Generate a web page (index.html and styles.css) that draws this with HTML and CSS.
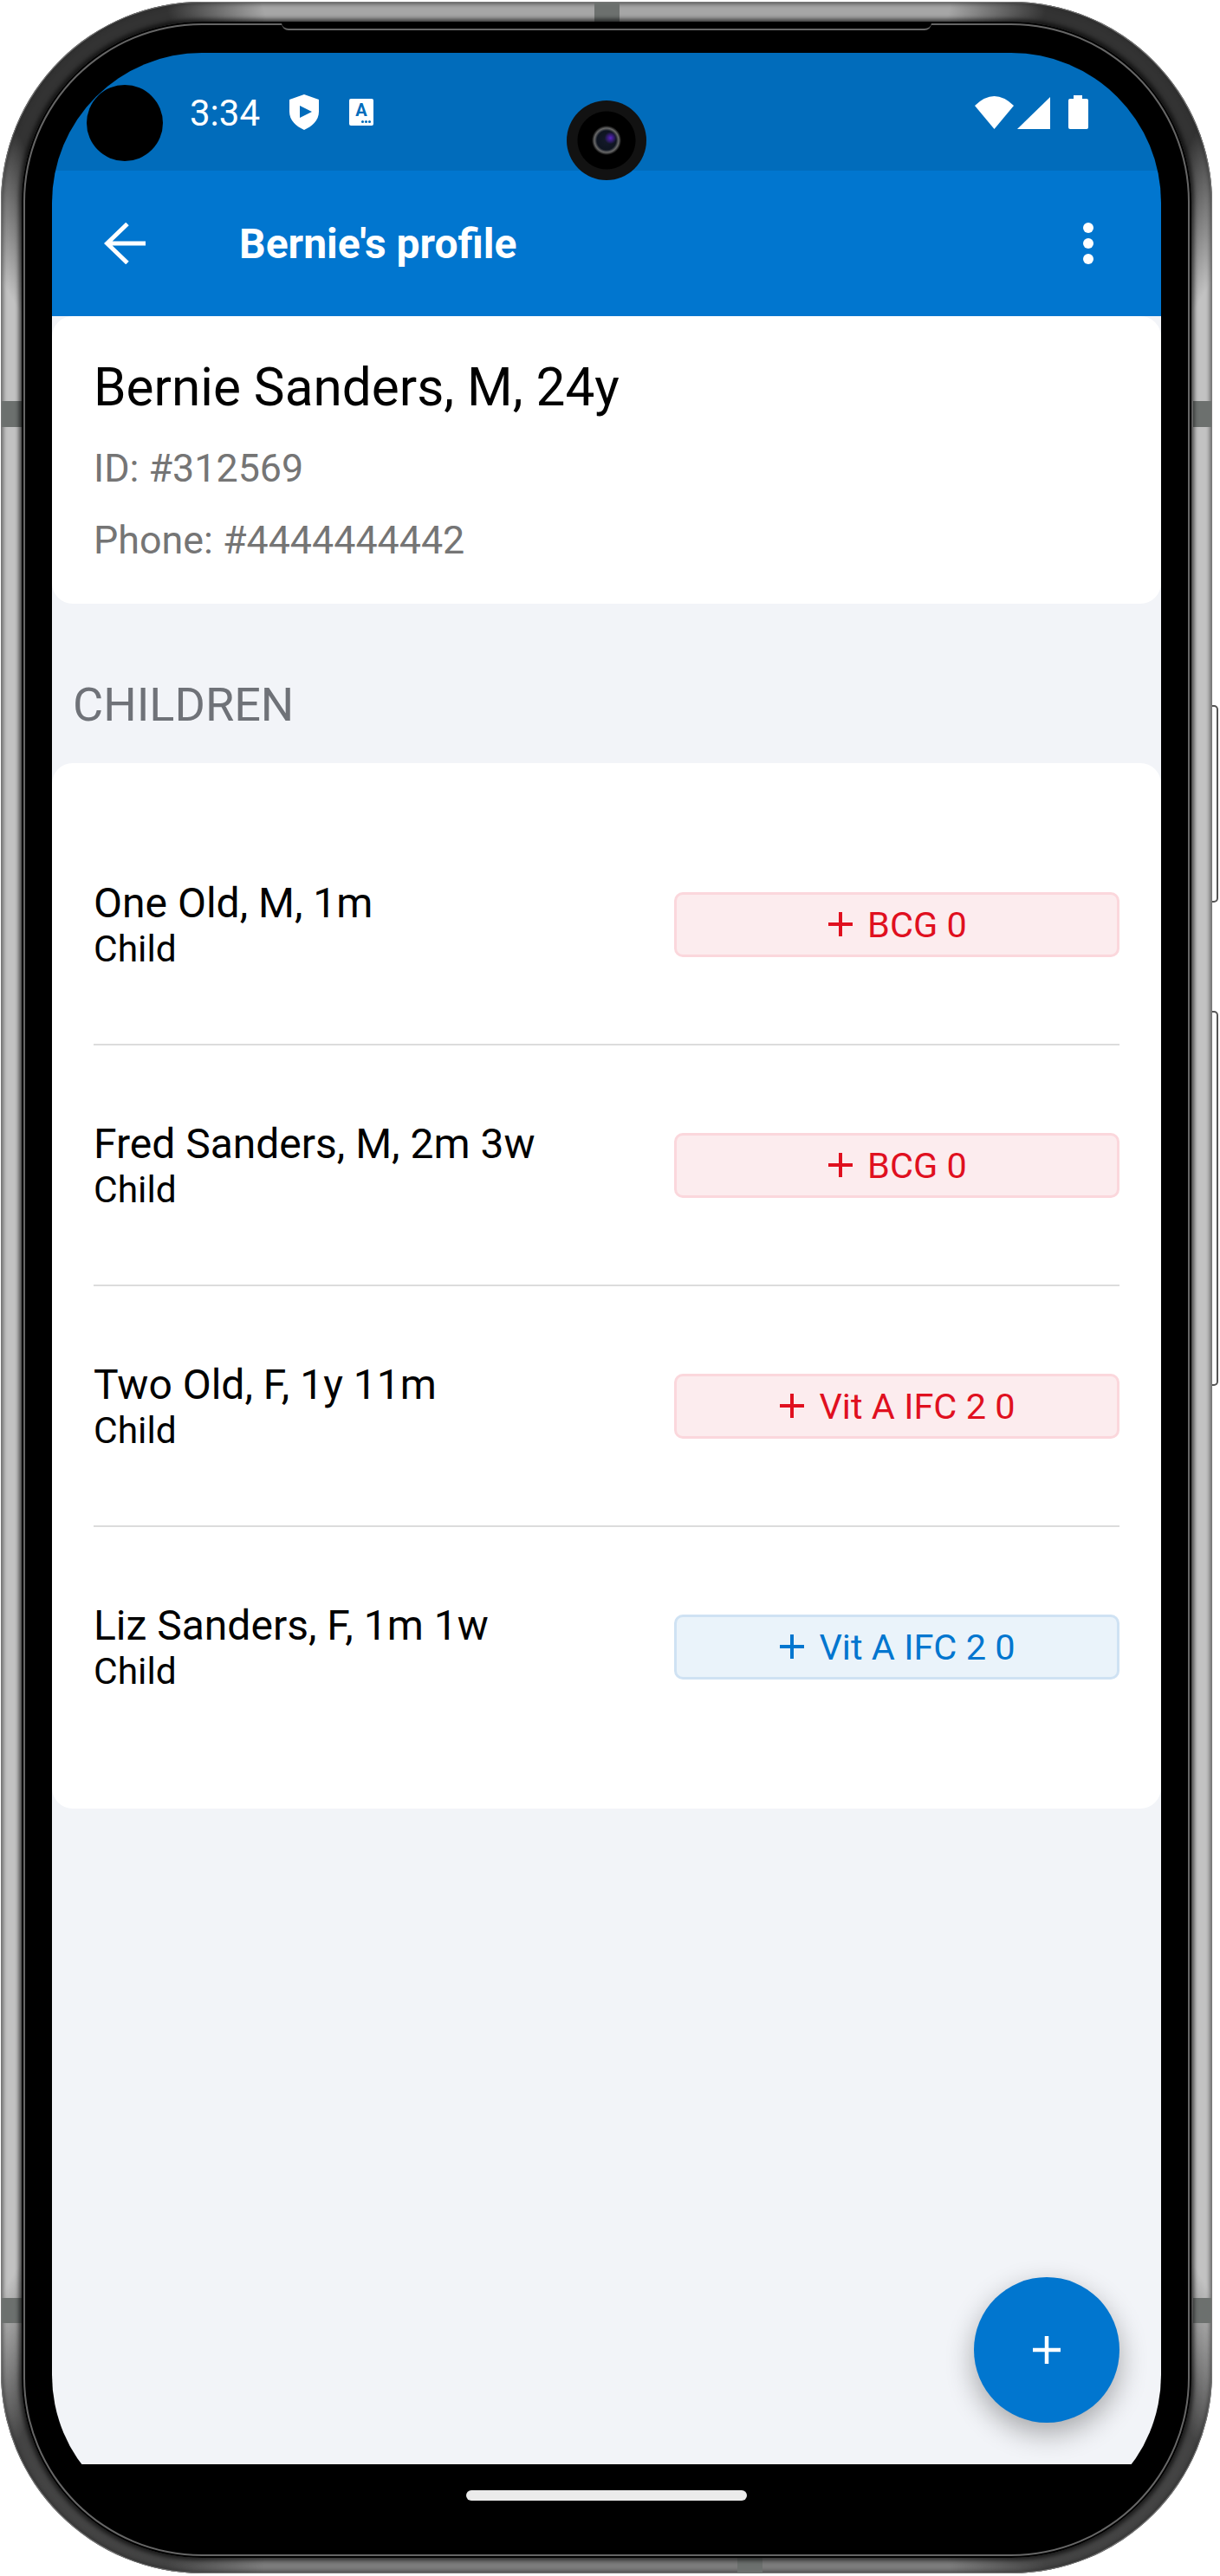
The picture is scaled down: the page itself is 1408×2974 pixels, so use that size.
FILE: index.html
```html
<!DOCTYPE html>
<html lang="en">
<head>
    <meta charset="UTF-8">
    <meta name="viewport" content="width=device-width, initial-scale=1.0">
    <title>Bernie's profile</title>
    <link rel="stylesheet" href="styles.css">
</head>
<body>
    <div class="phone">
        <!-- metal bands and side buttons -->
        <span class="band band-top"></span>
        <span class="band band-bottom"></span>
        <span class="band band-left band-upper"></span>
        <span class="band band-left band-lower"></span>
        <span class="band band-right band-upper"></span>
        <span class="band band-right band-lower"></span>
        <span class="side-button side-button-short"></span>
        <span class="side-button side-button-long"></span>

        <div class="bezel">
            <span class="notch"></span>
            <div class="screen">
                <span class="punch-hole"></span>
                <span class="camera"></span>

                <div class="status-bar">
                    <span class="status-time">3:34</span>
                    <svg class="icon-shield" width="34" height="41" viewBox="0 0 34 41">
                        <path d="M17 0 L34 6 V20 C34 30 26 37 17 41 C8 37 0 30 0 20 V6 Z" fill="#fff"/>
                        <path d="M12 13 V27 L26 20 Z" fill="#016cbb"/>
                    </svg>
                    <div class="icon-a">A<span class="icon-a-dots"></span></div>
                    <div class="status-right">
                        <svg class="icon-wifi" width="45" height="38" viewBox="0 0 45 38">
                            <path d="M0 11 Q22.5 -11 45 11 L22.5 38 Z" fill="#fff"/>
                        </svg>
                        <svg class="icon-signal" width="38" height="37" viewBox="0 0 38 37">
                            <path d="M0 37 L38 0 V37 Z" fill="#fff"/>
                        </svg>
                        <svg class="icon-battery" width="23" height="39" viewBox="0 0 23 39">
                            <path d="M6 0 H16 V4 H21 Q23 4 23 6 V37 Q23 39 21 39 H2 Q0 39 0 37 V6 Q0 4 2 4 H6 Z" fill="#fff"/>
                        </svg>
                    </div>
                </div>

                <div class="app-bar">
                    <svg class="icon-back" width="48" height="48" viewBox="0 0 48 48">
                        <path d="M48 24 H3 M27 1.5 L3.5 24 L27 46.5" fill="none" stroke="#fff" stroke-width="5"/>
                    </svg>
                    <span class="app-title">Bernie's profile</span>
                    <div class="more-dots"><i></i><i></i><i></i></div>
                </div>

                <div class="content">
                    <div class="card patient-card">
                        <div class="patient-name">Bernie Sanders, M, 24y</div>
                        <div class="patient-meta meta-id">ID: #312569</div>
                        <div class="patient-meta meta-phone">Phone: #4444444442</div>
                    </div>

                    <div class="section-title">CHILDREN</div>

                    <div class="card children-card">
                        <div class="child-row">
                            <div class="child-info">
                                <div class="child-name">One Old, M, 1m</div>
                                <div class="child-role">Child</div>
                            </div>
                            <div class="dose dose-red"><svg width="28" height="28" viewBox="0 0 28 28"><path d="M14 0 V28 M0 14 H28" stroke="currentColor" stroke-width="4"/></svg>BCG 0</div>
                        </div>
                        <div class="child-row">
                            <div class="child-info">
                                <div class="child-name">Fred Sanders, M, 2m 3w</div>
                                <div class="child-role">Child</div>
                            </div>
                            <div class="dose dose-red"><svg width="28" height="28" viewBox="0 0 28 28"><path d="M14 0 V28 M0 14 H28" stroke="currentColor" stroke-width="4"/></svg>BCG 0</div>
                        </div>
                        <div class="child-row">
                            <div class="child-info">
                                <div class="child-name">Two Old, F, 1y 11m</div>
                                <div class="child-role">Child</div>
                            </div>
                            <div class="dose dose-red"><svg width="28" height="28" viewBox="0 0 28 28"><path d="M14 0 V28 M0 14 H28" stroke="currentColor" stroke-width="4"/></svg>Vit A IFC 2 0</div>
                        </div>
                        <div class="child-row">
                            <div class="child-info">
                                <div class="child-name">Liz Sanders, F, 1m 1w</div>
                                <div class="child-role">Child</div>
                            </div>
                            <div class="dose dose-blue"><svg width="28" height="28" viewBox="0 0 28 28"><path d="M14 0 V28 M0 14 H28" stroke="currentColor" stroke-width="4"/></svg>Vit A IFC 2 0</div>
                        </div>
                    </div>

                    <div class="fab">
                        <svg width="32" height="32" viewBox="0 0 32 32"><path d="M16 0 V32 M0 16 H32" stroke="#fff" stroke-width="4.5"/></svg>
                    </div>
                </div>

                <div class="nav-bar"><span class="home-bar"></span></div>
            </div>
        </div>
    </div>
</body>
</html>
```

FILE: styles.css
```css
html, body {
    margin: 0;
    background: #fff;
    font-family: Roboto, "Liberation Sans", sans-serif;
}

/* phone frame */
.phone {
    position: relative;
    box-sizing: border-box;
    width: 1398px;
    height: 2969px;
    margin: 2px 0 0 1px;
    padding: 23px 24px 18px;
    border-radius: 232px;
    background: conic-gradient(
        #a6a6a6 0deg 15deg, #333 19deg 27deg, #c2c2c2 31deg 149deg,
        #444 153deg 161deg, #7c7c7c 165deg 195deg, #444 199deg 207deg,
        #c2c2c2 211deg 329deg, #333 333deg 341deg, #a6a6a6 345deg);
    box-shadow: inset 0 0 0 1px #777, inset 0 0 4px 3px rgba(40, 40, 40, 0.55);
}
.bezel {
    position: relative;
    box-sizing: border-box;
    height: 100%;
    padding: 36px 35px 38px;
    border-radius: 208px;
    background: #000;
    box-shadow: 0 0 5px 3px rgba(0, 0, 0, 0.65), inset 0 0 0 2px #000, inset 0 0 0 4px #666;
}
.notch {
    position: absolute;
    top: 2px;
    left: 300px;
    right: 300px;
    height: 6px;
    background: #000;
    border-bottom: 2px solid #666;
    border-radius: 0 0 8px 8px;
}
.band {
    position: absolute;
    background: #6c706e;
}
.band-top { top: 1px; left: 685px; width: 29px; height: 22px; }
.band-bottom { bottom: 0; left: 850px; width: 29px; height: 19px; }
.band-left { left: 1px; width: 23px; }
.band-right { right: 1px; width: 21px; }
.band-upper { top: 461px; height: 30px; }
.band-lower { top: 2651px; height: 29px; }
.side-button {
    position: absolute;
    left: 100%;
    width: 5px;
    border: 2px solid #555;
    border-left: none;
    border-radius: 0 5px 5px 0;
    background: #fff;
}
.side-button-short { top: 812px; height: 224px; }
.side-button-long { top: 1165px; height: 429px; }

/* screen */
.screen {
    position: relative;
    display: flex;
    flex-direction: column;
    height: 100%;
    border-radius: 173px;
    overflow: hidden;
    background: #000;
}
.punch-hole {
    position: absolute;
    top: 37px;
    left: 40px;
    width: 88px;
    height: 88px;
    border-radius: 50%;
    background: #000;
}
.camera {
    position: absolute;
    top: 55px;
    left: 594px;
    width: 92px;
    height: 92px;
    border-radius: 50%;
    background:
        radial-gradient(circle at 55% 47%, #5a22c4 0, rgba(90, 34, 196, 0) 7px),
        radial-gradient(circle at 50% 50%,
            #141a2a 0, #0e1420 11px, #6a6a6a 14px, #444 15px, #000 17px,
            #000 33px, #121212 34px);
}
.status-bar {
    display: flex;
    align-items: center;
    flex: none;
    height: 136px;
    padding: 0 84px 0 159px;
    box-sizing: border-box;
    background: #016cbb;
    color: #fff;
}
.status-time {
    width: 115px;
    margin-top: 3px;
    font-size: 42px;
}
.icon-a {
    position: relative;
    box-sizing: border-box;
    width: 28px;
    height: 31px;
    margin-left: 35px;
    border-radius: 2px;
    background: #fff;
    color: #016cbb;
    font-size: 20px;
    font-weight: 700;
    line-height: 27px;
    text-align: center;
}
.icon-a-dots {
    position: absolute;
    right: 3px;
    bottom: 3px;
    width: 3px;
    height: 3px;
    border-radius: 50%;
    background: #016cbb;
    box-shadow: -4px 0 #016cbb, -8px 0 #016cbb;
}
.status-right {
    display: flex;
    align-items: flex-end;
    margin-left: auto;
}
.icon-signal { margin-left: 4px; }
.icon-battery { margin-left: 21px; }

.app-bar {
    display: flex;
    align-items: center;
    flex: none;
    height: 168px;
    padding: 0 78px 0 60px;
    box-sizing: border-box;
    background: #0176cf;
    color: #fff;
}
.app-title {
    margin-left: 108px;
    font-size: 48px;
    font-weight: 700;
}
.more-dots {
    display: flex;
    flex-direction: column;
    gap: 6px;
    margin-left: auto;
}
.more-dots i {
    display: block;
    width: 12px;
    height: 12px;
    border-radius: 50%;
    background: #fff;
}

/* content */
.content {
    position: relative;
    flex: 1;
    background: #f2f4f8;
}
.card {
    background: #fff;
    border-radius: 24px;
}
.patient-card {
    box-sizing: border-box;
    height: 332px;
    padding: 48px 48px 0;
}
.patient-name {
    font-size: 60.3px;
    line-height: 70px;
    color: #000;
}
.patient-meta {
    font-size: 44.8px;
    line-height: 52px;
    color: #757575;
}
.meta-id { margin-top: 32px; }
.meta-phone { margin-top: 31px; }
.section-title {
    padding: 86px 0 36px 24px;
    font-size: 54px;
    line-height: 62px;
    color: #6f7278;
}
.children-card {
    box-sizing: border-box;
    height: 1207px;
    padding: 48px 48px 0;
}
.child-row {
    display: flex;
    align-items: center;
    justify-content: space-between;
    box-sizing: border-box;
    height: 278px;
    border-bottom: 2px solid #dcdcdc;
}
.child-row:last-child {
    border-bottom: none;
    height: 276px;
}
.child-info {
    padding-top: 2px;
}
.child-name {
    font-size: 48px;
    line-height: 56px;
    color: #000;
}
.child-role {
    font-size: 42.5px;
    line-height: 50px;
    color: #000;
}
.dose {
    display: flex;
    align-items: center;
    justify-content: center;
    gap: 17px;
    box-sizing: border-box;
    width: 514px;
    height: 75px;
    padding-left: 2px;
    border: 3px solid;
    border-radius: 10px;
    font-size: 41.5px;
}
.dose-red {
    background: #fcecee;
    border-color: #fbd7dc;
    color: #e0101f;
}
.dose-blue {
    background: #eaf3fa;
    border-color: #cfe2f3;
    color: #0176cf;
}
.fab {
    position: absolute;
    right: 48px;
    bottom: 48px;
    display: flex;
    align-items: center;
    justify-content: center;
    width: 168px;
    height: 168px;
    border-radius: 50%;
    background: #0176cf;
    box-shadow: 0 12px 32px rgba(0, 0, 0, 0.32);
}
.nav-bar {
    display: flex;
    justify-content: center;
    flex: none;
    height: 70px;
    padding-top: 30px;
    box-sizing: border-box;
    background: #000;
}
.home-bar {
    width: 324px;
    height: 12px;
    border-radius: 6px;
    background: #ebebeb;
}
```
